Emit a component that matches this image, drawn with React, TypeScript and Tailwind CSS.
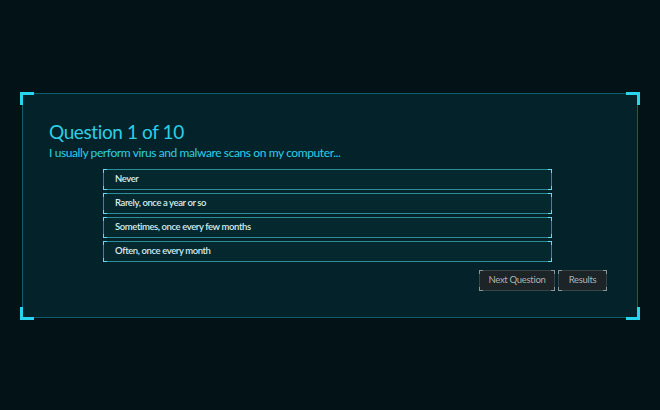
import React from "react";

const options = [
  "Never",
  "Rarely, once a year or so",
  "Sometimes, once every few months",
  "Often, once every month",
];

function Corners({ className }: { className: string }) {
  // small corner ticks drawn over the edges of a box
  return (
    <>
      <span className={`pointer-events-none absolute -left-[1px] -top-[1px] h-[4px] w-[4px] border-l border-t ${className}`} />
      <span className={`pointer-events-none absolute -right-[1px] -top-[1px] h-[4px] w-[4px] border-r border-t ${className}`} />
      <span className={`pointer-events-none absolute -left-[1px] -bottom-[1px] h-[4px] w-[4px] border-l border-b ${className}`} />
      <span className={`pointer-events-none absolute -right-[1px] -bottom-[1px] h-[4px] w-[4px] border-r border-b ${className}`} />
    </>
  );
}

export default function App() {
  return (
    <div className="h-[410px] w-full bg-[#021217] flex items-center justify-center font-['Lato','Noto_Sans',sans-serif]">
      <div className="relative w-[616px] border border-[#0d5d6a] bg-[#04222a] px-[26px] pt-[26px] pb-[26px]">
        <span className="absolute -left-[3px] -top-[2px] w-[14px] h-[13px] border-l-[3px] border-t-[3px] border-[#27d6ee]" />
        <span className="absolute -right-[3px] -top-[2px] w-[14px] h-[13px] border-r-[3px] border-t-[3px] border-[#27d6ee]" />
        <span className="absolute -left-[3px] -bottom-[3px] w-[14px] h-[13px] border-l-[3px] border-b-[3px] border-[#27d6ee]" />
        <span className="absolute -right-[3px] -bottom-[3px] w-[14px] h-[13px] border-r-[3px] border-b-[3px] border-[#27d6ee]" />

        <h1 className="text-[19px] leading-[24px] tracking-[-0.4px] text-[#2ccfe6]">Question 1 of 10</h1>
        <p className="text-[12px] leading-[18px] tracking-[-0.4px] text-[#2ccfe6]">
          I usually perform virus and malware scans on my computer...
        </p>

        <div className="ml-[54px] mt-[7px] w-[449px] flex flex-col gap-[3px]">
          {options.map((o) => (
            <button
              key={o}
              className="relative h-[21px] w-full border border-[#2a8d98] bg-[#05282f] pl-[11px] text-left text-[9.5px] font-semibold tracking-[-0.4px] text-[#d4ecee]"
            >
              <Corners className="border-[#5ce0ec]" />
              {o}
            </button>
          ))}
        </div>

        <div className="mt-[8px] mr-[4px] flex justify-end gap-[3px]">
          <button className="relative h-[21px] w-[76px] border border-[#3a4346] bg-[#1c2427] text-[9.5px] tracking-[-0.3px] text-[#aab3b5]">
            <Corners className="border-[#8b9598]" />
            Next Question
          </button>
          <button className="relative h-[21px] w-[49px] border border-[#3a4346] bg-[#1c2427] text-[9.5px] tracking-[-0.3px] text-[#aab3b5]">
            <Corners className="border-[#8b9598]" />
            Results
          </button>
        </div>
      </div>
    </div>
  );
}
